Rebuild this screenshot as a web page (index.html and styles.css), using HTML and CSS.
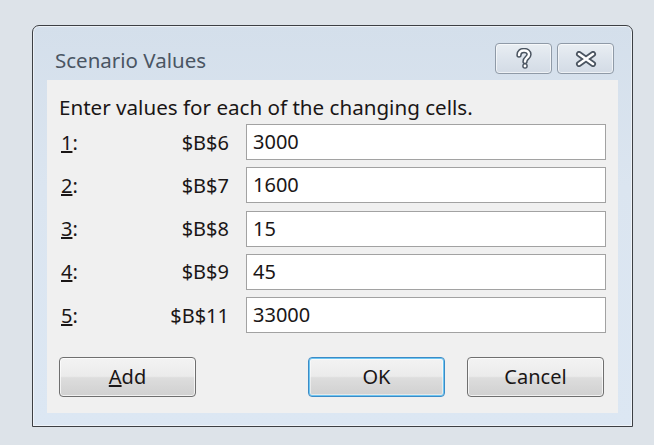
FILE: index.html
```html
<!DOCTYPE html>
<html lang="en">
<head>
<meta charset="utf-8">
<title>Scenario Values</title>
<link rel="stylesheet" href="styles.css">
</head>
<body>
<div class="dialog">
  <div class="titlebar">
    <div class="title">Scenario Values</div>
    <div class="caption-buttons">
      <div class="cap-btn">
        <svg width="18" height="22" viewBox="0 0 18 22">
          <path d="M4 7 C4 4 6 2.5 9 2.5 C12 2.5 14 4 14 6.5 C14 9.5 10 10 10 13.5" fill="none" stroke="#4b5561" stroke-width="5.4" stroke-linecap="round"/>
          <circle cx="10" cy="18" r="2.8" fill="#4b5561"/>
          <path d="M4 7 C4 4 6 2.5 9 2.5 C12 2.5 14 4 14 6.5 C14 9.5 10 10 10 13.5" fill="none" stroke="#ffffff" stroke-width="2.4" stroke-linecap="round"/>
          <circle cx="10" cy="18" r="1.4" fill="#ffffff"/>
        </svg>
      </div>
      <div class="cap-btn">
        <svg width="22" height="16" viewBox="0 0 22 16">
          <path d="M4 3 L18 13 M18 3 L4 13" fill="none" stroke="#4b5561" stroke-width="6" stroke-linecap="round"/>
          <path d="M4 3 L18 13 M18 3 L4 13" fill="none" stroke="#ffffff" stroke-width="2.6" stroke-linecap="round"/>
        </svg>
      </div>
    </div>
  </div>
  <div class="panel">
    <div class="prompt">Enter values for each of the changing cells.</div>
    <div class="rows">
      <div class="row"><span class="num"><u>1</u>:</span><span class="ref">$B$6</span><div class="field">3000</div></div>
      <div class="row"><span class="num"><u>2</u>:</span><span class="ref">$B$7</span><div class="field">1600</div></div>
      <div class="row"><span class="num"><u>3</u>:</span><span class="ref">$B$8</span><div class="field">15</div></div>
      <div class="row"><span class="num"><u>4</u>:</span><span class="ref">$B$9</span><div class="field">45</div></div>
      <div class="row"><span class="num"><u>5</u>:</span><span class="ref">$B$11</span><div class="field">33000</div></div>
    </div>
    <div class="buttons">
      <div class="btn"><u>A</u>dd</div>
      <div class="btn btn-default push">OK</div>
      <div class="btn">Cancel</div>
    </div>
  </div>
</div>
</body>
</html>
```

FILE: styles.css
```css
html, body {
  margin: 0;
  height: 100%;
}
body {
  background: #dde3e9;
  padding: 25px 0 0 32px;
  box-sizing: border-box;
  font-family: "Noto Sans", "Open Sans", sans-serif;
  color: #1a1616;
}
.dialog {
  width: 601px;
  height: 402px;
  box-sizing: border-box;
  border: 1px solid #3d4044;
  border-radius: 7px 7px 0 0;
  background: linear-gradient(180deg, #d4dfeb 0%, #dbe5f0 40%, #dce7f3 100%);
  box-shadow: inset 0 0 0 1px rgba(255,255,255,0.55);
  padding: 0 14px 13px 14px;
  display: flex;
  flex-direction: column;
}
.titlebar {
  height: 54px;
  display: flex;
  align-items: flex-start;
  justify-content: space-between;
  padding: 0 4px 0 8px;
}
.title {
  font-size: 20.5px;
  color: #4a5563;
  margin-top: 20px;
  line-height: 28px;
}
.caption-buttons {
  display: flex;
  gap: 5px;
  margin-top: 17px;
}
.cap-btn {
  width: 57px;
  height: 31px;
  box-sizing: border-box;
  border: 1px solid #8f9aa7;
  border-radius: 4px;
  background: linear-gradient(180deg, #e9eef3 0%, #dde4ec 50%, #d3dbe5 100%);
  box-shadow: inset 0 0 0 1px rgba(255,255,255,0.6);
  display: flex;
  align-items: center;
  justify-content: center;
}
.panel {
  flex: 1;
  background: #f0f0f0;
  padding: 15px 12px 15px 12px;
  display: flex;
  flex-direction: column;
}
.prompt {
  font-size: 20.6px;
  line-height: 24px;
  height: 24px;
  white-space: nowrap;
}
.rows {
  margin-top: 5px;
  display: flex;
  flex-direction: column;
  gap: 7.25px;
}
.row {
  display: flex;
  align-items: center;
  height: 36px;
  font-size: 20px;
}
.num {
  padding-left: 2px;
  width: 40px;
}
.ref {
  flex: 1;
  text-align: right;
  padding-right: 17px;
}
.field {
  width: 360px;
  height: 36px;
  box-sizing: border-box;
  border: 1px solid #a2a2a2;
  background: #ffffff;
  padding: 0 6px;
  line-height: 34px;
}
.buttons {
  margin-top: 24px;
  display: flex;
  padding-right: 2px;
}
.btn {
  width: 137px;
  height: 40px;
  box-sizing: border-box;
  border: 1px solid #6f6f6f;
  border-radius: 4px;
  background: linear-gradient(180deg, #f3f3f3 0%, #ebebeb 48%, #dddddd 52%, #d0d0d0 100%);
  box-shadow: inset 0 0 0 1px rgba(255,255,255,0.7);
  font-size: 20px;
  line-height: 38px;
  text-align: center;
}
.btn + .btn {
  margin-left: 22px;
}
.btn.push {
  margin-left: auto;
}
.btn-default {
  border: 1px solid #3c8bc6;
  box-shadow: inset 0 0 0 1px #6ec6f2, inset 0 0 0 2px rgba(255,255,255,0.5);
}
```
